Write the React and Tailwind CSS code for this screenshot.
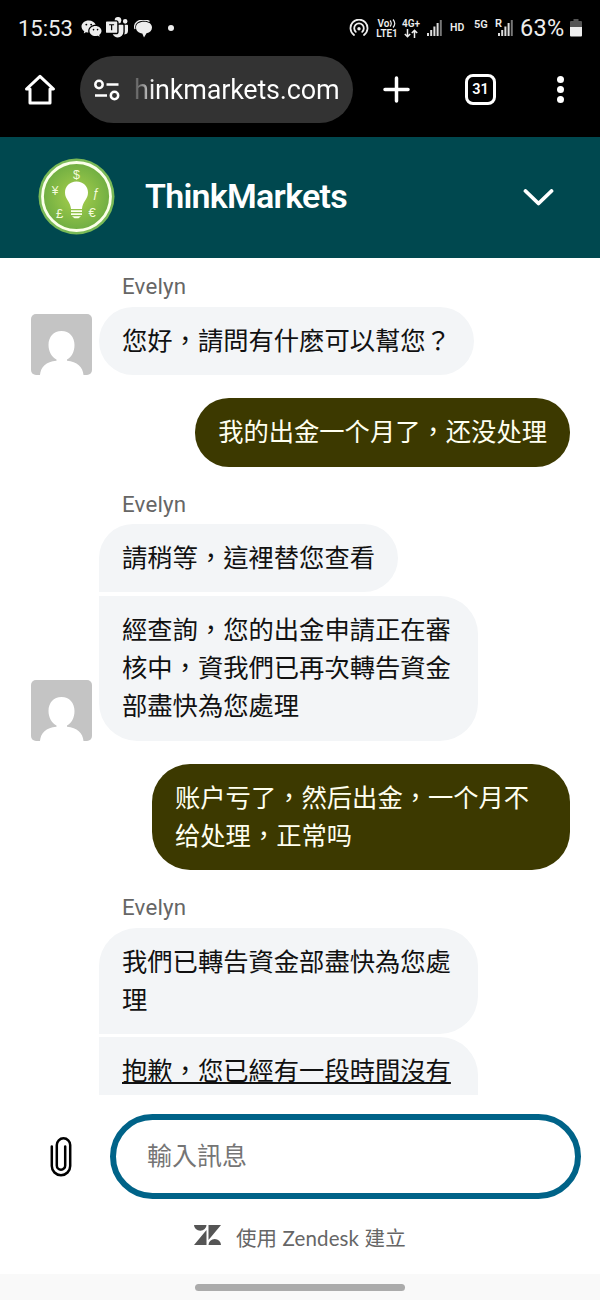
import React from "react";
import { BsWechat, BsMicrosoftTeams } from "react-icons/bs";

function Signal({ className }) {
  return (
    <svg className={className} viewBox="0 0 15 17" fill="#dedede" preserveAspectRatio="none">
      <rect x="0" y="13" width="2" height="3" />
      <rect x="3.2" y="10" width="2" height="6" />
      <rect x="6.4" y="6.5" width="2" height="9.5" />
      <rect x="9.6" y="3" width="2" height="13" />
      <rect x="12.8" y="0" width="2" height="16" fill="#777" />
    </svg>
  );
}

function StatusBar() {
  return (
    <div className="flex h-14 items-center pl-[18px] text-[#ededed]">
      <span className="mt-[2px] w-[55px] shrink-0 text-[22px] leading-none whitespace-nowrap">15:53</span>
      <BsWechat className="ml-[8px] h-5 w-[21px] shrink-0" />
      <BsMicrosoftTeams className="ml-[4px] h-[22px] w-[22px] shrink-0" />
      <svg className="mt-[2px] ml-[6px] h-[18px] w-[19px] shrink-0" viewBox="0 0 19 18">
        <path d="M1 9C-1 3 5 0 9 0c3 0 5 .4 6.500 1.500" fill="none" stroke="#ededed" strokeWidth="1.3" />
        <path d="M10 1.800c5 0 8 2.400 8 5.700 0 3-2 5-5.500 5.700L10 17.500 8.300 13.400C4.500 13 2 10.800 2 7.500 2 4 5 1.800 10 1.800Z" fill="#ededed" />
      </svg>
      <span className="ml-[15px] size-[6px] shrink-0 rounded-full bg-[#ededed]" />

      <svg className="ml-[175px] h-[18px] w-5 shrink-0" viewBox="0 0 20 18" fill="none" stroke="#ededed" strokeWidth="1.8" strokeLinecap="round">
        <path d="M5 16a8.500 8.500 0 1 1 10 0" />
        <path d="M6.800 12.800a4.800 4.800 0 1 1 6.400 0" />
        <circle cx="10" cy="9.800" r="1.700" fill="#ededed" stroke="none" />
      </svg>
      <div className="mt-[1px] ml-[7px] w-[22px] shrink-0 text-center text-[10px] leading-[9.500px] font-semibold whitespace-nowrap">
        <div className="flex items-center justify-center">
          Vo
          <svg className="h-[9px] w-[7px]" viewBox="0 0 7 9" fill="none" stroke="#ededed" strokeWidth="1.200">
            <path d="M1 1.500q2.500 3 0 6M4 .5q3.500 4 0 8" />
          </svg>
        </div>
        <div className="tracking-[-0.1px]">LTE1</div>
      </div>
      <div className="ml-[4px] flex w-[18px] shrink-0 flex-col items-center text-[10px] leading-[10px] font-semibold whitespace-nowrap">
        <span>4G+</span>
        <svg className="h-[9px] w-[14px]" viewBox="0 0 14 9" fill="none" stroke="#ededed" strokeWidth="1.500">
          <path d="M3.500 0v7.500M.8 5l2.700 2.700L6.200 5M10.500 9V1.500M7.800 4l2.700-2.700L13.200 4" />
        </svg>
      </div>
      <Signal className="ml-[7px] h-[17px] w-[15px] shrink-0" />
      <span className="ml-[8px] w-[17px] shrink-0 text-[10.500px] font-semibold">HD</span>
      <span className="mb-[8px] ml-[7px] w-[15px] shrink-0 text-[11px] leading-none font-semibold">5G</span>
      <div className="relative ml-[7px] flex w-[17px] shrink-0 justify-end">
        <Signal className="h-[17px] w-[15px]" />
        <span className="absolute -top-[1px] -left-[1px] bg-black text-[11px] leading-[9px] font-semibold">R</span>
      </div>
      <span className="mt-[2px] ml-[7px] w-[49px] shrink-0 text-[23.500px] leading-none tracking-[0.3px]">63%</span>
      <svg className="ml-[1px] h-[18px] w-3 shrink-0" viewBox="0 0 12 18">
        <path d="M3.500 0h5v2H11a1 1 0 0 1 1 1v5H0V3a1 1 0 0 1 1-1h2.500z" fill="#555" />
        <path d="M0 8h12v8.500a1 1 0 0 1-1 1H1a1 1 0 0 1-1-1z" fill="#efefef" />
      </svg>
    </div>
  );
}

function BrowserBar() {
  return (
    <div className="flex h-[81px] items-start text-white">
      <svg className="mt-[18px] ml-[24px] h-8 w-8 shrink-0" viewBox="0 0 32 32" fill="none" stroke="white" strokeWidth="3" strokeLinejoin="round">
        <path d="M2.500 15 16 2.300 29.500 15H26v14H6V15z" />
      </svg>
      <div className="ml-[24px] flex h-[67px] w-[273px] shrink-0 items-center rounded-full bg-[#333] pl-[14px]">
        <svg className="h-6 w-[26px] shrink-0" viewBox="0 0 26 24" fill="none" stroke="white" strokeWidth="2.500">
          <circle cx="5" cy="6.500" r="3.700" />
          <path d="M12.500 6.500h12M1 17.500h12" />
          <circle cx="20.500" cy="17.500" r="3.700" />
        </svg>
        <span className="ml-[14px] bg-[linear-gradient(90deg,#555_0,#999_10px,#fff_20px)] bg-clip-text text-[27px] leading-8 tracking-[-0.2px] whitespace-nowrap text-transparent">
          hinkmarkets.com
        </span>
      </div>
      <svg className="mt-[20px] ml-[30px] size-7 shrink-0" viewBox="0 0 28 28" stroke="white" strokeWidth="3.500" strokeLinecap="round">
        <path d="M13.500 2v23M2 13.500h23" />
      </svg>
      <div className="mt-[18px] ml-[54px] flex size-[31px] shrink-0 items-center justify-center rounded-[8px] border-3 border-white text-[14.500px] font-semibold">
        31
      </div>
      <div className="mt-[20px] ml-[61px] flex flex-col gap-[3px]">
        <span className="size-[7px] rounded-full bg-white" />
        <span className="size-[7px] rounded-full bg-white" />
        <span className="size-[7px] rounded-full bg-white" />
      </div>
    </div>
  );
}

function BrandLogo() {
  return (
    <svg className="mb-[2px] size-[77px] shrink-0" viewBox="0 0 77 77">
      <defs>
        <radialGradient id="leaf">
          <stop offset="0" stopColor="#a9d04c" />
          <stop offset="1" stopColor="#70ae42" />
        </radialGradient>
      </defs>
      <circle cx="38.500" cy="38.500" r="38" fill="#79b956" />
      <circle cx="38.500" cy="38.500" r="34" fill="url(#leaf)" stroke="#fbffe9" strokeWidth="2.800" />
      <path d="M38.500 23.500c-7 0-11.500 5-11.500 11 0 7 5.500 9 6 16.500h11c.5-7.500 6-9.500 6-16.500 0-6-4.500-11-11.500-11Z" fill="white" />
      <path d="M33 52.300h11v1.800H33zM33 55.300h11v1.800H33zM34 58.200h9l-2.500 2h-4z" fill="#fbffe9" />
      <g fill="#f4fbdc" fontFamily="Liberation Sans, sans-serif" fontSize="12.500" textAnchor="middle">
        <text x="38.500" y="20.500">$</text>
        <text x="17" y="36.500" fontSize="12">¥</text>
        <text x="57.500" y="38.500" fontStyle="italic">ƒ</text>
        <text x="21.500" y="59.500" fontSize="13">£</text>
        <text x="54" y="59" fontSize="13">€</text>
      </g>
    </svg>
  );
}

function Avatar() {
  return (
    <svg className="ml-[31px] h-[61px] w-[61px] shrink-0 rounded-[5px]" viewBox="0 0 61 61">
      <rect width="61" height="61" fill="#c4c4c4" />
      <path d="M30.500 17C22.500 17 17.500 23 17.500 31c0 7 3.500 12 8 14.500v1.200C15 47.500 9.500 53 9 61h43.500c-.5-8-6.500-13.500-16.500-14.300v-1.200c4.500-2.500 7.500-7.500 7.500-14.500 0-8-5-14-13-14Z" fill="white" />
    </svg>
  );
}

function Name({ className }) {
  return <div className={"pl-[122px] text-[22.300px] leading-[26px] tracking-[0.200px] text-[#666] " + className}>Evelyn</div>;
}

function Bubble({ className, children }) {
  return (
    <div className={"box-border max-w-[379px] bg-[#f3f5f7] px-[23px] pt-4 pb-[14px] text-[25.300px] leading-[38.300px] text-[#111] " + className}>
      {children}
    </div>
  );
}

function Reply({ className, children }) {
  return (
    <div className={"mr-[30px] ml-auto bg-[#3c3900] px-[23px] pt-4 pb-[14px] text-[25.300px] leading-[38.300px] text-[#fffff0] " + className}>
      {children}
    </div>
  );
}

export default function App() {
  return (
    <div lang="zh-Hant" className="flex h-[1300px] w-[600px] flex-col overflow-hidden bg-white font-['Roboto','Noto_Sans_CJK_TC',sans-serif]">
      <div className="h-[137px] shrink-0 bg-black">
        <StatusBar />
        <BrowserBar />
      </div>

      <header className="flex h-[121px] shrink-0 items-center bg-[#00484f] pr-[46px] pl-[38px] text-white">
        <BrandLogo />
        <h1 className="mb-[3px] ml-[30px] flex-1 text-[34px] leading-10 font-semibold tracking-[-0.72px]">ThinkMarkets</h1>
        <svg className="h-[18px] w-[31px]" viewBox="0 0 31 18" fill="none" stroke="white" strokeWidth="3.800" strokeLinecap="round" strokeLinejoin="round">
          <path d="M2.500 2l13 12.500 13-12.500" />
        </svg>
      </header>

      <main className="flex h-[837px] shrink-0 flex-col overflow-hidden">
        <Name className="mt-[15px]" />
        <div className="mt-[8px] flex items-end">
          <Avatar />
          <Bubble className="ml-[7px] rounded-[34px]">您好，請問有什麽可以幫您？</Bubble>
        </div>
        <Reply className="mt-[23px] rounded-[34px]">我的出金一个月了，还没处理</Reply>

        <Name className="mt-[24px]" />
        <div className="mt-[7px] flex items-end">
          <Avatar />
          <div className="ml-[7px] flex flex-col items-start gap-1">
            <Bubble className="rounded-[34px] rounded-bl-none">請稍等，這裡替您查看</Bubble>
            <Bubble className="rounded-[38px] rounded-tl-none">經查詢，您的出金申請正在審核中，資我們已再次轉告資金部盡快為您處理</Bubble>
          </div>
        </div>
        <Reply className="mt-[23px] w-[418px] rounded-[38px]">账户亏了，然后出金，一个月不给处理，正常吗</Reply>

        <Name className="mt-[24px]" />
        <div className="mt-[7.500px] flex flex-col items-start gap-1 pl-[99px]">
          <Bubble className="rounded-[38px] rounded-bl-none">我們已轉告資金部盡快為您處理</Bubble>
          <Bubble className="-mt-px w-[379px] rounded-tr-[38px] underline decoration-2 underline-offset-[2px] [text-decoration-skip-ink:none]">抱歉，您已經有一段時間沒有</Bubble>
        </div>
      </main>

      <footer className="flex h-[205px] shrink-0 flex-col">
        <div className="mt-[19px] flex items-center">
          <svg className="ml-[50px] h-[41px] w-[22px]" viewBox="0 0 22 41" fill="none" stroke="black" strokeWidth="2.500" strokeLinecap="round">
            <path d="M1.800 10.500v19.500a9.200 9.200 0 0 0 18.400 0V9a6.700 6.700 0 0 0-13.400 0v20.500a4.200 4.200 0 0 0 8.400 0V10.500" />
          </svg>
          <div className="ml-[38px] flex h-[85px] w-[471px] items-center rounded-full border-6 border-[#006388] pl-[31px] text-[25px] text-[#757575]">
            輸入訊息
          </div>
        </div>
        <div className="mt-[24px] flex h-[31px] items-center pl-[194px] text-[#666]">
          <svg className="mb-[7px] h-5 w-[27px]" viewBox="0 0 27 20" fill="#555">
            <path d="M0 0h12.500a6.250 5.800 0 0 1-12.500 0ZM12.500 5v15H0ZM14.500 0H27L14.500 15ZM14.500 20a6.250 6 0 0 1 12.500 0Z" />
          </svg>
          <span className="ml-[15px] font-['Lato','Noto_Sans_CJK_TC',sans-serif] text-[20.500px] tracking-[0.12px] whitespace-nowrap">使用 Zendesk 建立</span>
        </div>
        <div className="mt-auto flex h-[26px] justify-center bg-[#f9f9f9] pt-[10px]">
          <div className="h-[7px] w-[210px] rounded-full bg-[#ababab]" />
        </div>
      </footer>
    </div>
  );
}
